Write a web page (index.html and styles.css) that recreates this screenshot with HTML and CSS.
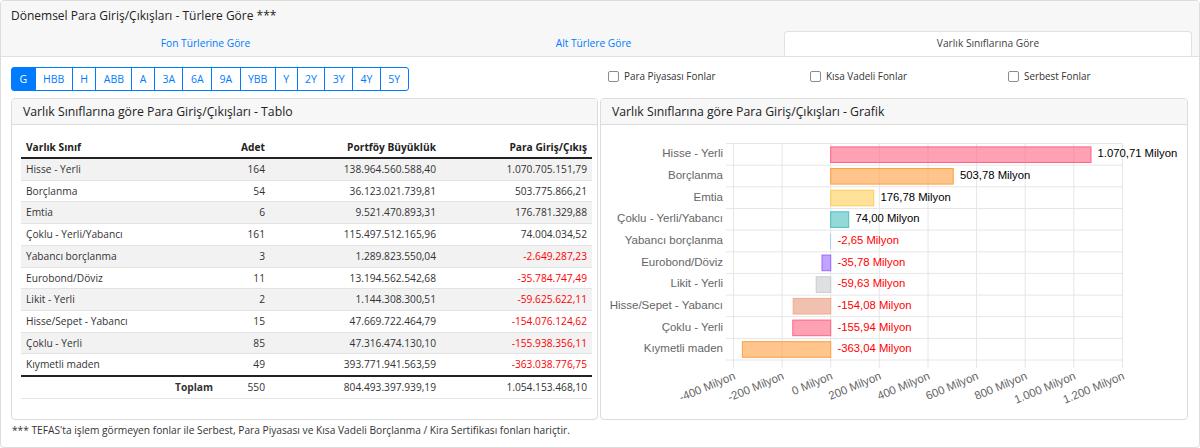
FILE: index.html
```html
<!DOCTYPE html>
<html lang="tr">
<head>
<meta charset="utf-8">
<title>Dönemsel Para Giriş/Çıkışları</title>
<link rel="stylesheet" href="styles.css">
</head>
<body>
<div class="outer">
  <div class="outer-head">
    <div class="title">Dönemsel Para Giriş/Çıkışları - Türlere Göre ***</div>
    <ul class="tabs">
      <li class="tab">Fon Türlerine Göre</li>
      <li class="tab">Alt Türlere Göre</li>
      <li class="tab active">Varlık Sınıflarına Göre</li>
    </ul>
  </div>
  <div class="outer-body">
    <div class="toolbar">
      <div class="btn-group">
        <span class="btn on">G</span><span class="btn">HBB</span><span class="btn">H</span><span class="btn">ABB</span><span class="btn">A</span><span class="btn">3A</span><span class="btn">6A</span><span class="btn">9A</span><span class="btn">YBB</span><span class="btn">Y</span><span class="btn">2Y</span><span class="btn">3Y</span><span class="btn">4Y</span><span class="btn">5Y</span>
      </div>
      <div class="checks">
        <label class="check"><span class="box"></span>Para Piyasası Fonlar</label>
        <label class="check"><span class="box"></span>Kısa Vadeli Fonlar</label>
        <label class="check"><span class="box"></span>Serbest Fonlar</label>
      </div>
    </div>
    <div class="cards">
      <div class="card card-left">
        <div class="card-head">Varlık Sınıflarına göre Para Giriş/Çıkışları - Tablo</div>
        <div class="card-body table-body">
          <table class="tbl">
            <colgroup><col class="c1"><col class="c2"><col class="c3"><col class="c4"></colgroup>
            <thead>
              <tr><th class="l">Varlık Sınıf</th><th>Adet</th><th>Portföy Büyüklük</th><th>Para Giriş/Çıkış</th></tr>
            </thead>
            <tbody>
              <tr><td class="l">Hisse - Yerli</td><td>164</td><td>138.964.560.588,40</td><td>1.070.705.151,79</td></tr>
              <tr><td class="l">Borçlanma</td><td>54</td><td>36.123.021.739,81</td><td>503.775.866,21</td></tr>
              <tr><td class="l">Emtia</td><td>6</td><td>9.521.470.893,31</td><td>176.781.329,88</td></tr>
              <tr><td class="l">Çoklu - Yerli/Yabancı</td><td>161</td><td>115.497.512.165,96</td><td>74.004.034,52</td></tr>
              <tr><td class="l">Yabancı borçlanma</td><td>3</td><td>1.289.823.550,04</td><td class="neg">-2.649.287,23</td></tr>
              <tr><td class="l">Eurobond/Döviz</td><td>11</td><td>13.194.562.542,68</td><td class="neg">-35.784.747,49</td></tr>
              <tr><td class="l">Likit - Yerli</td><td>2</td><td>1.144.308.300,51</td><td class="neg">-59.625.622,11</td></tr>
              <tr><td class="l">Hisse/Sepet - Yabancı</td><td>15</td><td>47.669.722.464,79</td><td class="neg">-154.076.124,62</td></tr>
              <tr><td class="l">Çoklu - Yerli</td><td>85</td><td>47.316.474.130,10</td><td class="neg">-155.938.356,11</td></tr>
              <tr><td class="l">Kıymetli maden</td><td>49</td><td>393.771.941.563,59</td><td class="neg">-363.038.776,75</td></tr>
            </tbody>
            <tfoot>
              <tr><td class="sum">Toplam</td><td>550</td><td>804.493.397.939,19</td><td>1.054.153.468,10</td></tr>
            </tfoot>
          </table>
        </div>
      </div>
      <div class="card card-right">
        <div class="card-head">Varlık Sınıflarına göre Para Giriş/Çıkışları - Grafik</div>
        <div class="card-body chart-body">
          <svg class="chart" width="588" height="296" viewBox="600 123 588 296" xmlns="http://www.w3.org/2000/svg">
            <g stroke="#e6e6e6" stroke-width="1">
              <line x1="733.5" y1="142.5" x2="733.5" y2="367"/>
              <line x1="782.1" y1="142.5" x2="782.1" y2="367"/>
              <line x1="830.7" y1="142.5" x2="830.7" y2="367"/>
              <line x1="879.3" y1="142.5" x2="879.3" y2="367"/>
              <line x1="928" y1="142.5" x2="928" y2="367"/>
              <line x1="976.6" y1="142.5" x2="976.6" y2="367"/>
              <line x1="1025.2" y1="142.5" x2="1025.2" y2="367"/>
              <line x1="1073.8" y1="142.5" x2="1073.8" y2="367"/>
              <line x1="1122.5" y1="142.5" x2="1122.5" y2="367"/>
              <line x1="726" y1="142.5" x2="1122.5" y2="142.5"/>
              <line x1="726" y1="164.2" x2="1122.5" y2="164.2"/>
              <line x1="726" y1="185.8" x2="1122.5" y2="185.8"/>
              <line x1="726" y1="207.5" x2="1122.5" y2="207.5"/>
              <line x1="726" y1="229.1" x2="1122.5" y2="229.1"/>
              <line x1="726" y1="250.8" x2="1122.5" y2="250.8"/>
              <line x1="726" y1="272.4" x2="1122.5" y2="272.4"/>
              <line x1="726" y1="294.1" x2="1122.5" y2="294.1"/>
              <line x1="726" y1="315.7" x2="1122.5" y2="315.7"/>
              <line x1="726" y1="337.4" x2="1122.5" y2="337.4"/>
              <line x1="726" y1="359" x2="1122.5" y2="359"/>
            </g>
            <g stroke-width="1">
              <rect x="830.7" y="145.9" width="260.3" height="15.6" fill="rgba(255,99,132,0.6)" stroke="rgb(255,99,132)"/>
              <rect x="830.7" y="167.5" width="122.5" height="15.6" fill="rgba(255,159,64,0.6)" stroke="rgb(255,159,64)"/>
              <rect x="830.7" y="189.2" width="43" height="15.6" fill="rgba(255,205,86,0.6)" stroke="rgb(255,205,86)"/>
              <rect x="830.7" y="210.8" width="18" height="15.6" fill="rgba(75,192,192,0.6)" stroke="rgb(75,192,192)"/>
              <rect x="830.1" y="232.5" width="0.6" height="15.6" fill="rgba(54,162,235,0.6)" stroke="none"/>
              <rect x="822" y="254.1" width="8.7" height="15.6" fill="rgba(153,102,255,0.6)" stroke="rgb(153,102,255)"/>
              <rect x="816.2" y="275.8" width="14.5" height="15.6" fill="rgba(201,203,207,0.6)" stroke="rgb(201,203,207)"/>
              <rect x="793.2" y="297.4" width="37.5" height="15.6" fill="rgba(233,150,122,0.6)" stroke="rgb(240,170,145)"/>
              <rect x="792.8" y="319.1" width="37.9" height="15.6" fill="rgba(255,99,132,0.6)" stroke="rgb(255,99,132)"/>
              <rect x="742.4" y="340.7" width="88.3" height="15.6" fill="rgba(255,159,64,0.6)" stroke="rgb(255,159,64)"/>
            </g>
            <g class="ylab" text-anchor="end" dominant-baseline="middle">
              <text x="723" y="153.4">Hisse - Yerli</text>
              <text x="723" y="175">Borçlanma</text>
              <text x="723" y="196.7">Emtia</text>
              <text x="723" y="218.3">Çoklu - Yerli/Yabancı</text>
              <text x="723" y="240">Yabancı borçlanma</text>
              <text x="723" y="261.6">Eurobond/Döviz</text>
              <text x="723" y="283.3">Likit - Yerli</text>
              <text x="723" y="304.9">Hisse/Sepet - Yabancı</text>
              <text x="723" y="326.6">Çoklu - Yerli</text>
              <text x="723" y="348.2">Kıymetli maden</text>
            </g>
            <g class="vlab" dominant-baseline="middle">
              <text x="1097.5" y="153.4">1.070,71 Milyon</text>
              <text x="960" y="175">503,78 Milyon</text>
              <text x="880.5" y="196.7">176,78 Milyon</text>
              <text x="855.5" y="218.3">74,00 Milyon</text>
              <text class="neg" x="837.5" y="240">-2,65 Milyon</text>
              <text class="neg" x="837.5" y="261.6">-35,78 Milyon</text>
              <text class="neg" x="837.5" y="283.3">-59,63 Milyon</text>
              <text class="neg" x="837.5" y="304.9">-154,08 Milyon</text>
              <text class="neg" x="837.5" y="326.6">-155,94 Milyon</text>
              <text class="neg" x="837.5" y="348.2">-363,04 Milyon</text>
            </g>
            <g class="xlab" text-anchor="end" dominant-baseline="middle">
              <text transform="translate(735 375) rotate(-22.5)">-400 Milyon</text>
              <text transform="translate(783.6 375) rotate(-22.5)">-200 Milyon</text>
              <text transform="translate(832.2 375) rotate(-22.5)">0 Milyon</text>
              <text transform="translate(880.8 375) rotate(-22.5)">200 Milyon</text>
              <text transform="translate(929.5 375) rotate(-22.5)">400 Milyon</text>
              <text transform="translate(978.1 375) rotate(-22.5)">600 Milyon</text>
              <text transform="translate(1026.7 375) rotate(-22.5)">800 Milyon</text>
              <text transform="translate(1075.3 375) rotate(-22.5)">1.000 Milyon</text>
              <text transform="translate(1124 375) rotate(-22.5)">1.200 Milyon</text>
            </g>
          </svg>
        </div>
      </div>
    </div>
    <div class="note">*** TEFAS'ta işlem görmeyen fonlar ile Serbest, Para Piyasası ve Kısa Vadeli Borçlanma / Kira Sertifikası fonları hariçtir.</div>
  </div>
</div>
</body>
</html>
```

FILE: styles.css
```css
* { box-sizing: border-box; }
html, body { margin: 0; padding: 0; background: #fff; }
body {
  font-family: "Open Sans", "Noto Sans", "Liberation Sans", sans-serif;
  color: #212529;
  width: 1200px;
  height: 448px;
  overflow: hidden;
}
.outer {
  width: 1200px;
  height: 448px;
  border: 1px solid #dcdcdc;
  border-radius: 4px;
  overflow: hidden;
}
.outer-head {
  background: #f7f7f7;
  border-bottom: 1px solid #dee2e6;
  height: 56px;
  padding: 0 7px 0 7px;
}
.title {
  font-size: 12px;
  line-height: 18px;
  padding: 6px 0 0 3px;
  color: #222;
  height: 30px;
}
.tabs {
  list-style: none;
  margin: 0;
  padding: 0;
  display: flex;
  height: 25px;
}
.tab {
  flex: 1 1 auto;
  text-align: center;
  font-size: 10.2px;
  line-height: 23px;
  color: #007bff;
  border: 1px solid transparent;
  border-top-left-radius: 4px;
  border-top-right-radius: 4px;
}
.tab.active {
  background: #fff;
  color: #444;
  border-color: #dee2e6 #dee2e6 #fff;
  height: 25px;
}
.outer-body {
  padding: 10px 10px 0 10px;
}
.toolbar {
  display: flex;
  height: 31px;
}
.btn-group {
  display: flex;
  height: 24px;
  width: 589px;
  flex: 0 0 589px;
  align-self: flex-start;
}
.btn {
  font-size: 10.5px;
  line-height: 22px;
  padding: 0 7.45px;
  color: #007bff;
  border: 1px solid #007bff;
  margin-left: -1px;
  background: #fff;
}
.btn:first-child { margin-left: 0; border-radius: 3px 0 0 3px; }
.btn:last-child { border-radius: 0 3px 3px 0; }
.btn.on { background: #007bff; color: #fff; }
.checks {
  display: grid;
  grid-template-columns: 202px 198px 170px;
  padding-top: 1px;
  flex: 0 0 auto;
}
.check {
  display: flex;
  align-items: center;
  font-size: 9.9px;
  line-height: 16px;
  color: #333;
  padding-left: 8px;
  height: 16px;
}
.box {
  width: 11px;
  height: 11px;
  border: 1px solid #8c8c8c;
  border-radius: 2px;
  margin-right: 5px;
  background: #fff;
}
.cards {
  display: flex;
  gap: 2px;
  height: 322px;
}
.card {
  border: 1px solid #dcdcdc;
  border-radius: 4px;
  display: flex;
  flex-direction: column;
  overflow: hidden;
}
.card-left { width: 587px; flex: 0 0 587px; }
.card-right { width: 588px; flex: 0 0 588px; }
.card-head {
  background: #f7f7f7;
  border-bottom: 1px solid #dcdcdc;
  height: 26px;
  font-size: 12.25px;
  line-height: 25px;
  padding-left: 11px;
  color: #222;
}
.table-body {
  padding: 12px 5px 0 9px;
}
.tbl {
  border-collapse: collapse;
  width: 571px;
  table-layout: fixed;
  font-size: 10.2px;
  color: #333;
}
.c1 { width: 197px; }
.c2 { width: 52px; }
.c3 { width: 171px; }
.c4 { width: 151px; }
.tbl th {
  font-weight: bold;
  color: #222;
  text-align: right;
  padding: 3px 5px;
  line-height: 14px;
  height: 20px;
  border-bottom: 2px solid #222;
}
.tbl td {
  text-align: right;
  padding: 3px 5px;
  line-height: 14.7px;
  border-top: 1px solid #e3e3e3;
  white-space: nowrap;
}
.tbl .l { text-align: left; }
.tbl tbody tr:nth-child(odd) td { background: #f2f2f2; }
.tbl tfoot td {
  border-top: 2px solid #222;
  border-bottom: 1px solid #e3e3e3;
}
.tbl td.sum { font-weight: bold; }
.tbl td.neg { color: #ff0000; }
.chart-body { flex: 1; }
.chart { display: block; margin-left: -1px; margin-top: -1px; }
.ylab text { font-family: "Liberation Sans", Arial, sans-serif; font-size: 11.5px; fill: #666; }
.vlab text { font-family: "Liberation Sans", Arial, sans-serif; font-size: 11.3px; fill: #000; }
.vlab text.neg { fill: #ff0000; }
.xlab text { font-family: "Liberation Sans", Arial, sans-serif; font-size: 11.5px; fill: #666; }
.note {
  font-size: 10.2px;
  line-height: 14px;
  color: #333;
  padding: 3px 0 0 1px;
}
```
